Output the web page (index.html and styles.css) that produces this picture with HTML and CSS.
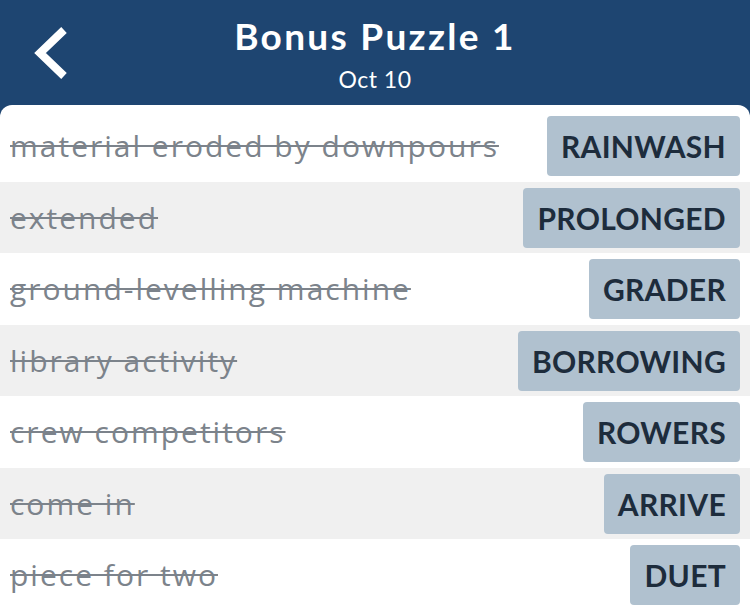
FILE: index.html
```html
<!DOCTYPE html>
<html lang="en">
<head>
  <meta charset="UTF-8" />
  <title>Bonus Puzzle 1</title>
  <link rel="stylesheet" href="styles.css">
</head>
<body>
  <div class="header">
    <a class="back" href="#">
      <svg width="44" height="60" viewBox="0 0 44 60">
        <polyline points="34,6 10,29 34,52" fill="none" stroke="#fff" stroke-width="8" stroke-linejoin="miter" />
      </svg>
    </a>
    <h1>Bonus Puzzle 1</h1>
    <div class="date">Oct 10</div>
  </div>
  <div class="card">
    <div class="row"><span class="clue">material eroded by downpours</span><span class="answer">RAINWASH</span></div>
    <div class="row"><span class="clue">extended</span><span class="answer">PROLONGED</span></div>
    <div class="row"><span class="clue">ground-levelling machine</span><span class="answer">GRADER</span></div>
    <div class="row"><span class="clue">library activity</span><span class="answer">BORROWING</span></div>
    <div class="row"><span class="clue">crew competitors</span><span class="answer">ROWERS</span></div>
    <div class="row"><span class="clue">come in</span><span class="answer">ARRIVE</span></div>
    <div class="row"><span class="clue">piece for two</span><span class="answer">DUET</span></div>
  </div>
</body>
</html>
```
FILE: styles.css
```css
body {
  margin: 0;
  background: #1e4571;
  font-family: 'Lato', sans-serif;
  overflow: hidden;
}
.header {
  position: relative;
  height: 105px;
  color: white;
  text-align: center;
}
.back {
  position: absolute;
  left: 30px;
  top: 24px;
}
h1 {
  margin: 0;
  padding-top: 14px;
  font-size: 37px;
  font-weight: 700;
  line-height: 44px;
  letter-spacing: 2.3px;
}
.date {
  font-size: 23px;
  line-height: 28px;
  margin-top: 7px;
  letter-spacing: 0.5px;
}
.card {
  background: white;
  border-radius: 12px 12px 0 0;
  padding-top: 5px;
  height: 510px;
}
.row {
  display: flex;
  align-items: center;
  justify-content: space-between;
  height: 71.5px;
  padding: 0 10px;
}
.row:nth-child(even) {
  background: #f0f0f0;
}
.clue {
  font-family: 'Open Sans', sans-serif;
  font-size: 30px;
  color: #7c838b;
  text-decoration: line-through;
  text-decoration-thickness: 2px;
  letter-spacing: 2px;
}
.answer {
  background: #b0c1cf;
  color: #1d2c3c;
  font-weight: 700;
  font-size: 30px;
  height: 60px;
  line-height: 60px;
  padding: 0 14px;
  border-radius: 4px;
  margin-top: 1px;
  letter-spacing: 0.3px;
}
```
